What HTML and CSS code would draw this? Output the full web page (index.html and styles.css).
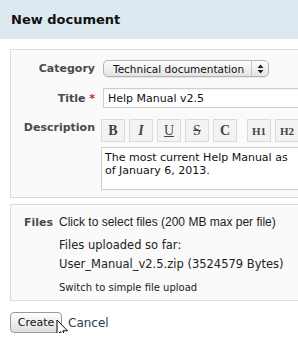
FILE: index.html
```html
<!DOCTYPE html>
<html lang="en">
<head>
  <meta charset="UTF-8">
  <title>New document</title>
  <link rel="stylesheet" href="styles.css">
</head>
<body>
  <header class="page-header">
    <h1>New document</h1>
  </header>
  <form class="doc-form">
    <fieldset class="box main-box">
      <label class="label">Category</label>
      <div class="select">
        <span class="select-text">Technical documentation</span>
        <span class="select-arrows">
          <svg width="7" height="10" viewBox="0 0 7 10"><path d="M3.5 0.5 L6.5 4 L0.5 4 Z M3.5 9.5 L6.5 6 L0.5 6 Z" fill="#222"/></svg>
        </span>
      </div>

      <label class="label label-title">Title <span class="req">*</span></label>
      <input class="text-input" type="text" value="Help Manual v2.5">

      <label class="label label-top">Description</label>
      <div class="editor">
        <div class="toolbar">
          <span class="tool">B</span>
          <span class="tool tool-i">I</span>
          <span class="tool tool-u">U</span>
          <span class="tool tool-s">S</span>
          <span class="tool">C</span>
          <span class="tool tool-h tool-gap">H1</span>
          <span class="tool tool-h">H2</span>
        </div>
        <div class="textarea">The most current Help Manual as<br>of January 6, 2013.</div>
      </div>
    </fieldset>

    <fieldset class="box files-box">
      <label class="label label-files">Files</label>
      <div class="files">
        <div class="files-pick">Click to select files (200 MB max per file)</div>
        <div class="files-list">Files uploaded so far:<br>User_Manual_v2.5.zip (3524579 Bytes)</div>
        <div class="files-switch">Switch to simple file upload</div>
      </div>
    </fieldset>

    <div class="actions">
      <button type="button" class="btn">Create</button>
      <a class="cancel">Cancel</a>
      <svg class="cursor" width="13" height="20" viewBox="0 0 13 20"><path d="M1 1 L1 16 L4.5 12.5 L7 18.5 L9.3 17.5 L6.8 11.8 L11.5 11.8 Z" fill="#fff" stroke="#000" stroke-width="1" stroke-linejoin="round"/></svg>
    </div>
  </form>
</body>
</html>
```

FILE: styles.css
```css
* { box-sizing: border-box; }
body {
  margin: 0;
  font-family: 'DejaVu Sans', sans-serif;
  font-size: 11px;
  color: #222;
  background: #fff;
  overflow: hidden;
}
.page-header {
  background: #dde9f0;
  height: 39px;
  padding: 0 11px;
  display: flex;
  align-items: center;
}
.page-header h1 {
  margin: 0;
  font-size: 13px;
  font-weight: bold;
  color: #111;
}
.doc-form {
  padding: 10px 0 0 10px;
  position: relative;
}
.box {
  margin: 0;
  width: 300px;
  border: 1px solid #dcdcdc;
  background: #fafafa;
  display: grid;
  grid-template-columns: 84px 1fr;
  column-gap: 6px;
  align-items: center;
}
.main-box {
  padding: 10px 0 7px 0;
}
.label {
  text-align: right;
  font-weight: bold;
  font-size: 11px;
  color: #4a4a4a;
}
.req { color: #c0282d; }
.label-title { margin-top: 11px; }
.label-top {
  align-self: start;
  margin-top: 13px;
}
.select {
  width: 166px;
  height: 17px;
  margin-left: 2px;
  border: 1px solid #b4b4b4;
  border-radius: 5px;
  background: linear-gradient(to bottom, #fdfdfd, #e4e4e4);
  display: flex;
  align-items: center;
  box-shadow: 0 1px 1px rgba(0,0,0,0.08);
}
.select-text {
  flex: 1;
  padding-left: 9px;
  font-size: 10.5px;
  color: #111;
  white-space: nowrap;
}
.select-arrows {
  width: 17px;
  height: 100%;
  border-left: 1px solid #c4c4c4;
  display: flex;
  align-items: center;
  justify-content: center;
}
.text-input {
  margin: 11px 0 0 2px;
  height: 20px;
  border: 1px solid #cfcfcf;
  background: #fff;
  padding: 0 4px;
  font-family: 'DejaVu Sans', sans-serif;
  font-size: 11px;
  color: #111;
  outline: none;
  box-shadow: inset 0 1px 1px rgba(0,0,0,0.06);
}
.editor {
  margin-top: 11px;
  display: flex;
  flex-direction: column;
  gap: 5px;
}
.toolbar {
  display: flex;
  gap: 4px;
}
.tool {
  width: 24px;
  height: 23px;
  border: 1px solid #dadada;
  background: #f3f3f3;
  display: flex;
  align-items: center;
  justify-content: center;
  font-family: 'Liberation Serif', serif;
  font-weight: bold;
  font-size: 14px;
  color: #444;
}
.tool-i { font-style: italic; }
.tool-u { font-weight: normal; text-decoration: underline; }
.tool-s { font-weight: normal; text-decoration: line-through; }
.tool-h { font-size: 11px; }
.tool-gap { margin-left: 6px; }
.textarea {
  height: 43px;
  border: 1px solid #cfcfcf;
  background: #fff;
  padding: 3px 3px;
  line-height: 13px;
  font-size: 11px;
  color: #111;
}
.files-box {
  margin-top: 6px;
  padding: 10px 0 6px 0;
  grid-template-columns: 42px 1fr;
  align-items: start;
}
.label-files {
  margin-top: 1px;
}
.files-pick {
  font-family: 'Liberation Sans', sans-serif;
  font-size: 12px;
  color: #222;
  line-height: 14px;
}
.files-list {
  margin-top: 7px;
  font-size: 11.5px;
  line-height: 19px;
  color: #222;
}
.files-switch {
  margin-top: 8px;
  font-size: 10px;
  line-height: 12px;
  color: #222;
}
.actions {
  display: flex;
  align-items: center;
  gap: 6px;
  margin-top: 11px;
  position: relative;
}
.btn {
  height: 21px;
  width: 52px;
  border: 1px solid #9a9a9a;
  border-radius: 4px;
  background: linear-gradient(to bottom, #ffffff, #dedede);
  font-family: 'DejaVu Sans', sans-serif;
  font-size: 11px;
  color: #111;
  padding: 0;
}
.cancel {
  font-size: 12px;
  color: #2a3a4a;
}
.cursor {
  position: absolute;
  left: 46px;
  top: 7px;
}
```
